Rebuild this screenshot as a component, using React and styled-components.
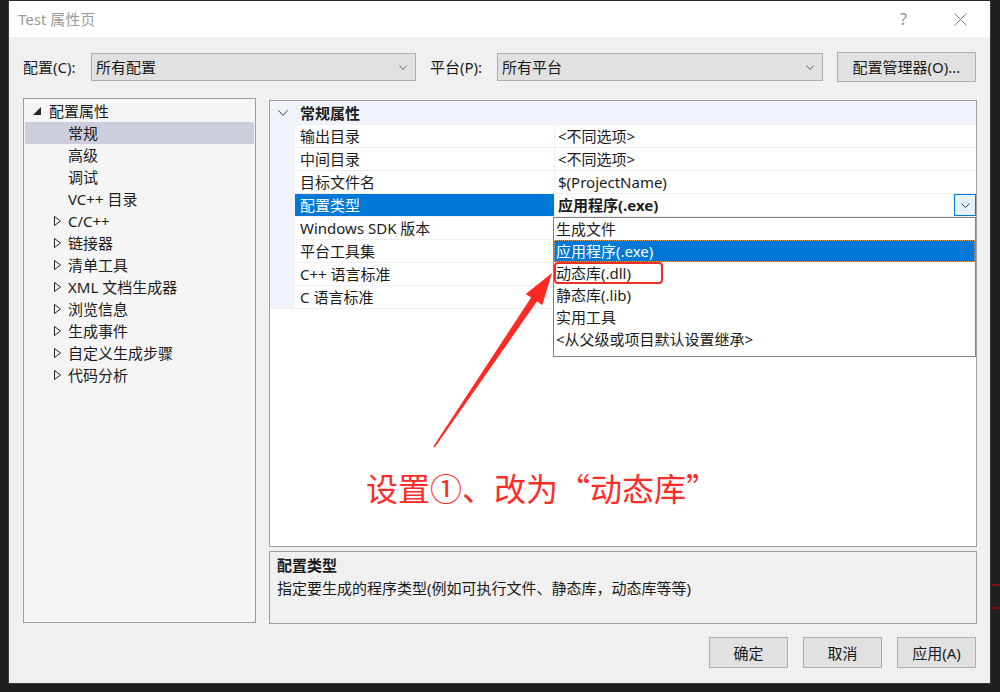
import React from "react";
import styled, { createGlobalStyle } from "styled-components";

const FONT = `"Noto Sans", "Noto Sans CJK SC", sans-serif`;

const GlobalStyle = createGlobalStyle`
  html, body { margin: 0; padding: 0; background: #1f1f1f; }
  body { font-family: ${FONT}; font-size: 15px; color: #1b1b1b; }
  * { box-sizing: border-box; }
`;

const Page = styled.div`
  position: relative;
  width: 1000px;
  height: 692px;
  overflow: hidden;
  background: #1f1f1f;
`;

const Dialog = styled.div`
  margin-left: 8px;
  width: 983px;
  height: 684px;
  border: 1px solid #3c3c3c;
  border-top-color: #2a2a2a;
  background: #f0f0f0;
  display: flex;
  flex-direction: column;
`;

const TitleBar = styled.div`
  height: 36px;
  flex: none;
  background: #ffffff;
  display: flex;
  align-items: center;
  padding-left: 9px;
  padding-right: 23px;
`;

const Title = styled.div`
  color: #9a9a9a;
  font-size: 15px;
  line-height: 20px;
`;

const TitleActions = styled.div`
  margin-left: auto;
  display: flex;
  align-items: center;
  gap: 47px;
  color: #8a8a8a;
`;

const Help = styled.span`
  font-size: 16px;
  line-height: 20px;
  color: #8c8c8c;
`;

const Body = styled.div`
  flex: 1;
  display: flex;
  flex-direction: column;
  padding: 15px 14px 0 14px;
`;

const ConfigRow = styled.div`
  display: flex;
  align-items: center;
  height: 30px;
`;

const Label = styled.div`
  width: ${(p) => p.$w}px;
  margin-left: ${(p) => p.$ml || 0}px;
  flex: none;
  line-height: 20px;
`;

const Combo = styled.div`
  width: ${(p) => p.$w}px;
  height: 28px;
  flex: none;
  background: #e1e1e1;
  border: 1px solid #adadad;
  display: flex;
  align-items: center;
  padding: 0 8px 0 4px;
  line-height: 20px;
`;

const ComboText = styled.span`
  flex: 1;
`;

const Button = styled.div`
  width: ${(p) => p.$w}px;
  height: ${(p) => p.$h}px;
  margin-left: ${(p) => p.$ml || 0}px;
  flex: none;
  background: #e1e1e1;
  border: 1px solid #adadad;
  display: flex;
  align-items: center;
  justify-content: center;
  line-height: 20px;
`;

const Main = styled.div`
  display: flex;
  gap: 13px;
  margin-top: 16px;
`;

const Tree = styled.div`
  width: 233px;
  height: 525px;
  flex: none;
  background: #f5f5f5;
  border: 1px solid #9c9c9c;
  padding-top: 1px;
`;

const TreeRow = styled.div`
  height: 22px;
  margin: 0 1px;
  display: flex;
  align-items: center;
  padding-left: ${(p) => (p.$level === 0 ? 8 : 28)}px;
  background: ${(p) => (p.$selected ? "#cccedb" : "transparent")};
  line-height: 20px;
  white-space: nowrap;
`;

const ToggleSlot = styled.span`
  width: ${(p) => (p.$level === 0 ? 16 : 15)}px;
  flex: none;
  display: flex;
  align-items: center;
`;

const RightCol = styled.div`
  width: 708px;
  flex: none;
  margin-top: 2px;
  display: flex;
  flex-direction: column;
  gap: 4px;
`;

const Grid = styled.div`
  position: relative;
  height: 447px;
  background: #ffffff;
  border: 1px solid #a0a0a0;
`;

const GridHeader = styled.div`
  height: 24px;
  display: flex;
  align-items: center;
  background: #f0f4fa;
  font-weight: 700;
  line-height: 20px;
`;

const Gutter = styled.div`
  width: 25px;
  height: 100%;
  flex: none;
  display: flex;
  align-items: center;
  justify-content: center;
  background: #f0f4fa;
`;

const HeaderText = styled.span`
  padding-left: 5px;
`;

const GridRow = styled.div`
  height: 23px;
  display: flex;
`;

const NameCell = styled.div`
  width: 260px;
  flex: none;
  padding-left: 5px;
  border-bottom: 1px solid #efefef;
  border-right: 1px solid #efefef;
  background: ${(p) => (p.$selected ? "#0078d7" : "#ffffff")};
  color: ${(p) => (p.$selected ? "#ffffff" : "#1b1b1b")};
  line-height: 22px;
  white-space: nowrap;
`;

const ValueCell = styled.div`
  position: relative;
  flex: 1;
  padding-left: 3px;
  border-bottom: 1px solid #efefef;
  font-weight: ${(p) => (p.$bold ? 700 : 400)};
  line-height: 22px;
  white-space: nowrap;
`;

const DropButton = styled.div`
  position: absolute;
  right: 0;
  top: 0;
  width: 22px;
  height: 22px;
  border: 1px solid #0078d7;
  background: #e5f1fb;
  display: flex;
  align-items: center;
  justify-content: center;
`;

const DropList = styled.div`
  position: absolute;
  left: 283px;
  top: 116px;
  width: 423px;
  height: 140px;
  background: #ffffff;
  border: 1px solid #828282;
  z-index: 2;
`;

const DropItem = styled.div`
  position: relative;
  height: 22px;
  padding-left: 2px;
  line-height: 22px;
  white-space: nowrap;
  background: ${(p) => (p.$active ? "#0078d7" : "transparent")};
  color: ${(p) => (p.$active ? "#ffffff" : "#1b1b1b")};
  outline: ${(p) => (p.$active ? "1px dotted #e8a050" : "none")};
  outline-offset: -1px;
`;

const Callout = styled.div`
  position: absolute;
  left: 0;
  top: 0;
  width: 109px;
  height: 22px;
  border: 2.5px solid #e8302a;
  border-radius: 4px;
`;

const Desc = styled.div`
  height: 73px;
  background: #f0f0f0;
  border: 1px solid #a0a0a0;
  padding: 2px 7px;
`;

const DescTitle = styled.div`
  font-weight: 700;
  line-height: 22px;
`;

const DescText = styled.div`
  line-height: 24px;
`;

const ButtonRow = styled.div`
  display: flex;
  justify-content: flex-end;
  gap: 15px;
  margin-top: 13px;
`;

const Annotation = styled.div`
  position: absolute;
  left: 366px;
  top: 471px;
  font-family: "Noto Sans CJK SC", sans-serif;
  font-size: 32px;
  line-height: 32px;
  color: #ff2b26;
  white-space: nowrap;
`;

const ArrowSvg = styled.svg`
  position: absolute;
  left: 420px;
  top: 260px;
  width: 145px;
  height: 200px;
`;

const EdgeMark = styled.div`
  position: absolute;
  right: 0;
  top: ${(p) => p.$top}px;
  width: 8px;
  height: 2px;
  background: #7e1111;
`;

const Chevron = ({ w = 8, h = 5, color = "#555" }) => (
  <svg width={w} height={h} viewBox={`0 0 ${w} ${h}`}>
    <polyline
      points={`0.5,0.5 ${w / 2},${h - 0.5} ${w - 0.5},0.5`}
      fill="none"
      stroke={color}
      strokeWidth="1"
    />
  </svg>
);

const Expanded = () => (
  <svg width="8" height="8" viewBox="0 0 8 8">
    <polygon points="8,0 8,8 0,8" fill="#262626" />
  </svg>
);

const Collapsed = () => (
  <svg width="8" height="10" viewBox="0 0 8 10" style={{ marginLeft: 1 }}>
    <polygon points="0.5,0.5 6.5,5 0.5,9.5" fill="none" stroke="#262626" strokeWidth="1" />
  </svg>
);

const CloseIcon = () => (
  <svg width="13" height="13" viewBox="0 0 13 13">
    <path d="M0.5 0.5 L12.5 12.5 M12.5 0.5 L0.5 12.5" stroke="#7a7a7a" strokeWidth="1" />
  </svg>
);

const treeItems = [
  { label: "配置属性", level: 0, toggle: "open" },
  { label: "常规", level: 1, selected: true },
  { label: "高级", level: 1 },
  { label: "调试", level: 1 },
  { label: "VC++ 目录", level: 1 },
  { label: "C/C++", level: 1, toggle: "closed" },
  { label: "链接器", level: 1, toggle: "closed" },
  { label: "清单工具", level: 1, toggle: "closed" },
  { label: "XML 文档生成器", level: 1, toggle: "closed" },
  { label: "浏览信息", level: 1, toggle: "closed" },
  { label: "生成事件", level: 1, toggle: "closed" },
  { label: "自定义生成步骤", level: 1, toggle: "closed" },
  { label: "代码分析", level: 1, toggle: "closed" },
];

const rows = [
  { name: "输出目录", value: "<不同选项>" },
  { name: "中间目录", value: "<不同选项>" },
  { name: "目标文件名", value: "$(ProjectName)" },
  { name: "配置类型", value: "应用程序(.exe)", selected: true },
  { name: "Windows SDK 版本", value: "" },
  { name: "平台工具集", value: "" },
  { name: "C++ 语言标准", value: "" },
  { name: "C 语言标准", value: "" },
];

const options = [
  { label: "生成文件" },
  { label: "应用程序(.exe)", active: true },
  { label: "动态库(.dll)", callout: true },
  { label: "静态库(.lib)" },
  { label: "实用工具" },
  { label: "<从父级或项目默认设置继承>" },
];

export default function App() {
  return (
    <Page>
      <GlobalStyle />
      <Dialog>
        <TitleBar>
          <Title>Test 属性页</Title>
          <TitleActions>
            <Help>?</Help>
            <CloseIcon />
          </TitleActions>
        </TitleBar>
        <Body>
          <ConfigRow>
            <Label $w={68}>配置(C):</Label>
            <Combo $w={325}>
              <ComboText>所有配置</ComboText>
              <Chevron w={8} h={5} color="#666" />
            </Combo>
            <Label $w={67} $ml={14}>平台(P):</Label>
            <Combo $w={326}>
              <ComboText>所有平台</ComboText>
              <Chevron w={8} h={5} color="#666" />
            </Combo>
            <Button $w={139} $h={30} $ml={14}>配置管理器(O)...</Button>
          </ConfigRow>
          <Main>
            <Tree>
              {treeItems.map((it) => (
                <TreeRow key={it.label} $level={it.level} $selected={it.selected}>
                  <ToggleSlot $level={it.level}>
                    {it.toggle === "open" && <Expanded />}
                    {it.toggle === "closed" && <Collapsed />}
                  </ToggleSlot>
                  {it.label}
                </TreeRow>
              ))}
            </Tree>
            <RightCol>
              <Grid>
                <GridHeader>
                  <Gutter>
                    <Chevron w={10} h={6} color="#444" />
                  </Gutter>
                  <HeaderText>常规属性</HeaderText>
                </GridHeader>
                {rows.map((r) => (
                  <GridRow key={r.name}>
                    <Gutter />
                    <NameCell $selected={r.selected}>{r.name}</NameCell>
                    <ValueCell $bold={r.selected}>
                      {r.value}
                      {r.selected && (
                        <DropButton>
                          <Chevron w={9} h={5} color="#333" />
                        </DropButton>
                      )}
                    </ValueCell>
                  </GridRow>
                ))}
                <DropList>
                  {options.map((o) => (
                    <DropItem key={o.label} $active={o.active}>
                      {o.label}
                      {o.callout && <Callout />}
                    </DropItem>
                  ))}
                </DropList>
              </Grid>
              <Desc>
                <DescTitle>配置类型</DescTitle>
                <DescText>指定要生成的程序类型(例如可执行文件、静态库，动态库等等)</DescText>
              </Desc>
            </RightCol>
          </Main>
          <ButtonRow>
            <Button $w={79} $h={31}>确定</Button>
            <Button $w={79} $h={31}>取消</Button>
            <Button $w={79} $h={31}>应用(A)</Button>
          </ButtonRow>
        </Body>
      </Dialog>
      <ArrowSvg viewBox="420 260 145 200">
        <polygon
          points="433.3,446.5 531.1,297.5 525.7,293.9 552,273 542.3,305.1 536.9,301.5 434.7,447.5"
          fill="#ff2b22"
        />
      </ArrowSvg>
      <Annotation>设置①、改为“动态库”</Annotation>
      <EdgeMark $top={584} />
      <EdgeMark $top={607} />
    </Page>
  );
}
